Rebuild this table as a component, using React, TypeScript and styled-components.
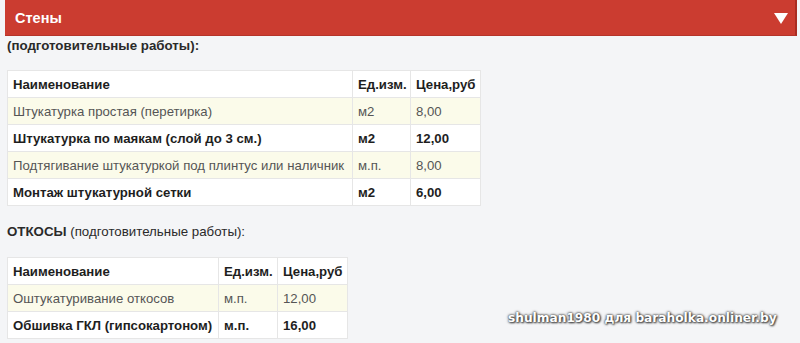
import React from 'react'
import styled, { createGlobalStyle } from 'styled-components'

const GlobalStyle = createGlobalStyle`
  html, body {
    margin: 0;
    padding: 0;
    background: #f4f5f7;
    font-family: "Liberation Sans", Arial, sans-serif;
  }
`

const Page = styled.div`
  position: relative;
  width: 800px;
  height: 343px;
  overflow: hidden;
  background: #f4f5f7;
`

const HeaderBar = styled.div`
  margin: 0 3px 0 5px;
  height: 36px;
  box-sizing: border-box;
  background: #cb3c30;
  border-right: 2px solid #a92c22;
  border-bottom: 1px solid #b5342a;
  display: flex;
  align-items: center;
  justify-content: space-between;
  padding: 0 7px 0 10px;
`

const HeaderTitle = styled.span`
  color: #fff;
  font-weight: bold;
  font-size: 14.5px;
  margin-top: 1px;
`

const Content = styled.div`
  padding: 0 0 0 7px;
  color: #222;
  font-size: 13px;
`

const SectionTitle = styled.div<{ $top: number; $bottom: number }>`
  margin-top: ${(p) => p.$top}px;
  margin-bottom: ${(p) => p.$bottom}px;
  line-height: 18px;
  font-size: 13.3px;
  color: #2a2a2a;
`

const Strong = styled.b`
  font-weight: bold;
`

const Table = styled.table`
  border-collapse: collapse;
  background: #fff;
  table-layout: fixed;
`

const Cell = styled.td<{ $w?: number }>`
  width: ${(p) => (p.$w ? `${p.$w}px` : 'auto')};
  box-sizing: border-box;
  height: 27px;
  padding: 1px 3px 0 5px;
  border: 1px solid #e6e6e6;
  font-size: 13.2px;
  white-space: nowrap;
`

const Row = styled.tr<{ $kind: 'head' | 'light' | 'bold' }>`
  background: ${(p) => (p.$kind === 'light' ? '#fbfbea' : '#fff')};
  color: ${(p) => (p.$kind === 'light' ? '#555' : '#1e1e1e')};
  font-weight: ${(p) => (p.$kind === 'light' ? 'normal' : 'bold')};
`

const Watermark = styled.div`
  position: absolute;
  left: 508px;
  top: 311px;
  font-family: "DejaVu Sans", Verdana, sans-serif;
  font-weight: bold;
  font-size: 12.2px;
  color: #fff;
  text-shadow: 0 0 2px #333, 0 0 3px #555, 1px 1px 2px #444;
`

type Item = { name: string; unit: string; price: string; bold: boolean }

const walls: Item[] = [
  { name: 'Штукатурка простая (перетирка)', unit: 'м2', price: '8,00', bold: false },
  { name: 'Штукатурка по маякам (слой до 3 см.)', unit: 'м2', price: '12,00', bold: true },
  { name: 'Подтягивание штукатуркой под плинтус или наличник', unit: 'м.п.', price: '8,00', bold: false },
  { name: 'Монтаж штукатурной сетки', unit: 'м2', price: '6,00', bold: true },
]

const slopes: Item[] = [
  { name: 'Оштукатуривание откосов', unit: 'м.п.', price: '12,00', bold: false },
  { name: 'Обшивка ГКЛ (гипсокартоном)', unit: 'м.п.', price: '16,00', bold: true },
]

function PriceTable({ items, widths }: { items: Item[]; widths: [number, number, number] }) {
  return (
    <Table>
      <tbody>
        <Row $kind="head">
          <Cell $w={widths[0]}>Наименование</Cell>
          <Cell $w={widths[1]}>Ед.изм.</Cell>
          <Cell $w={widths[2]}>Цена,руб</Cell>
        </Row>
        {items.map((it) => (
          <Row key={it.name} $kind={it.bold ? 'bold' : 'light'}>
            <Cell>{it.name}</Cell>
            <Cell>{it.unit}</Cell>
            <Cell>{it.price}</Cell>
          </Row>
        ))}
      </tbody>
    </Table>
  )
}

export default function App() {
  return (
    <Page>
      <GlobalStyle />
      <HeaderBar>
        <HeaderTitle>Стены</HeaderTitle>
        <svg width="14" height="12" viewBox="0 0 14 12">
          <polygon points="0,1 14,1 7,12" fill="#fff" />
        </svg>
      </HeaderBar>
      <Content>
        <SectionTitle $top={1} $bottom={15}>
          <Strong>(подготовительные работы):</Strong>
        </SectionTitle>
        <PriceTable items={walls} widths={[345, 58, 70]} />
        <SectionTitle $top={17} $bottom={16}>
          <Strong>ОТКОСЫ</Strong> (подготовительные работы):
        </SectionTitle>
        <PriceTable items={slopes} widths={[211, 59, 70]} />
      </Content>
      <Watermark>shulman1980 для baraholka.onliner.by</Watermark>
    </Page>
  )
}
